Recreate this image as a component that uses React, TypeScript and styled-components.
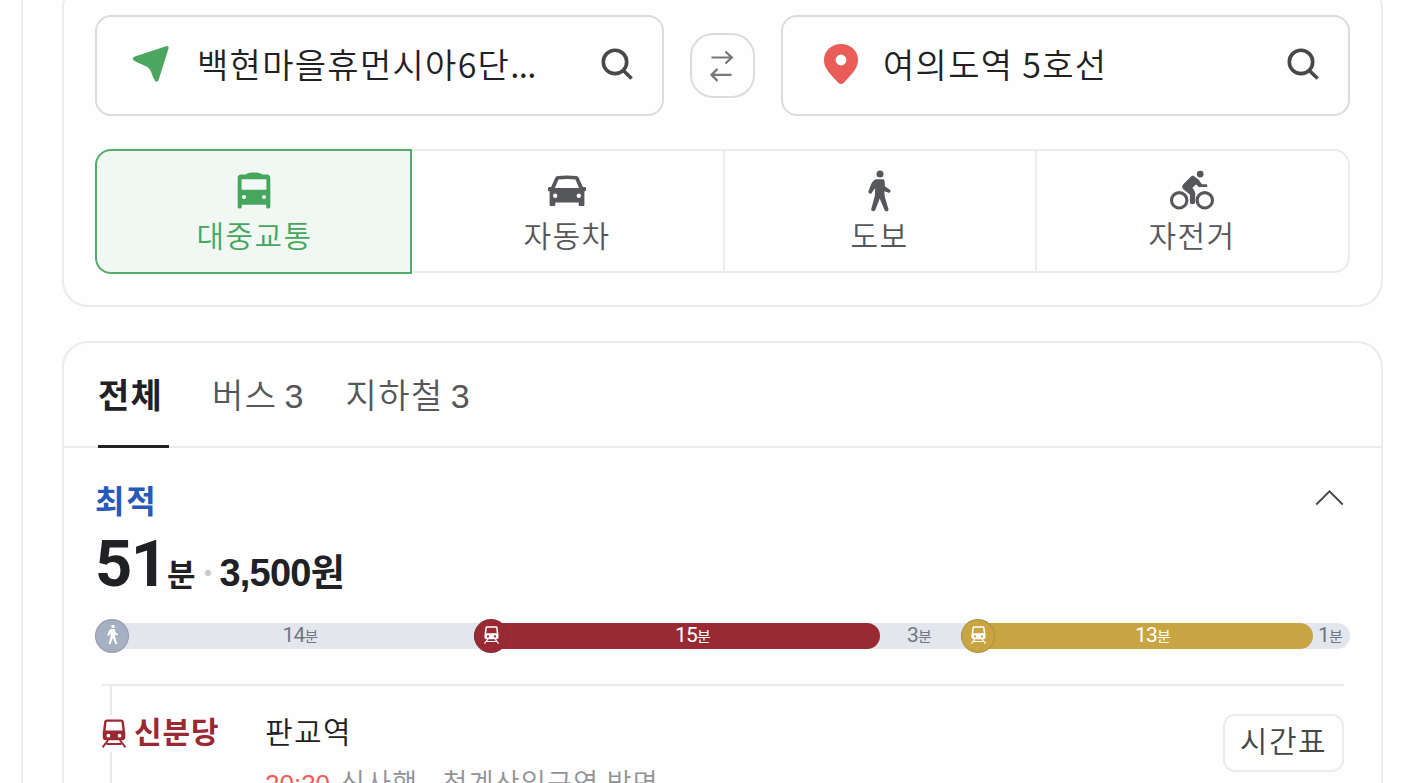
import React from 'react';
import styled, { createGlobalStyle, css } from 'styled-components';

const KR = "'Noto Sans CJK KR', sans-serif";
const LATIN = "'Liberation Sans', Arial, sans-serif";
const NUMERIC = "Roboto, 'Liberation Sans', sans-serif";

const GlobalStyle = createGlobalStyle`
  * {
    box-sizing: border-box;
  }

  body {
    margin: 0;
    background: #fefefe;
    overflow: hidden;
  }

  button {
    margin: 0;
    padding: 0;
    background: none;
    border: 0;
    font: inherit;
    color: inherit;
  }

  svg {
    display: block;
    flex: none;
  }
`;

const Page = styled.div`
  display: flex;
  height: 783px;
  padding-left: 21px;
  overflow: hidden;
  font-family: ${KR};
  font-weight: 350;
  color: #202124;
`;

const Panel = styled.main`
  flex: 1;
  margin-top: -18px;
  padding: 0 40px 0 39px;
  border-left: 2px solid #ebebf0;
`;

const Card = styled.section`
  border: 2px solid #ebebed;
  border-radius: 26px;
`;

const SearchCard = styled(Card)`
  height: 325px;
  padding: 31px 31px 0;
`;

const SearchRow = styled.div`
  display: grid;
  grid-template-columns: 569px 65px 569px;
  justify-content: space-between;
  align-items: center;
`;

const PlaceField = styled.div`
  display: grid;
  grid-template-columns: 64px 1fr 34px;
  align-items: center;
  height: 101px;
  padding: 0 28px 3px 36px;
  border: 2px solid #dbdcde;
  border-radius: 16px;
`;

const PlaceName = styled.span`
  font-size: 34px;
  line-height: 50px;
  letter-spacing: 1.3px;
  white-space: pre;
`;

const Ellipsis = styled.span`
  letter-spacing: -0.6px;
`;

const PinBox = styled.span`
  padding-left: 5px;
`;

const SwapButton = styled.button`
  display: grid;
  place-items: center;
  width: 65px;
  height: 65px;
  padding-right: 2px;
  border: 2px solid #dbdcde;
  border-radius: 23px;
`;

const ModeTabs = styled.div`
  display: grid;
  grid-template-columns: 317px 313px 312px 313px;
  margin-top: 33px;
`;

const ModeTab = styled.button<{ $active?: boolean }>`
  display: flex;
  flex-direction: column;
  align-items: center;
  height: 124px;
  padding: 18px 2px 0 0;
  border: 2px solid #ebebec;
  border-left: 0;
  color: #56575a;

  &:first-child {
    border-radius: 16px 0 0 16px;
  }

  &:last-child {
    border-radius: 0 16px 16px 0;
  }

  ${({ $active }) =>
    $active &&
    css`
      height: 125px;
      padding: 18px 0 0 1px;
      border: 2px solid #53ac69;
      background: #f1f8f3;
      color: #46a65c;
    `}
`;

const ModeLabel = styled.span`
  margin-top: -1px;
  padding-left: 1px;
  font-size: 30px;
  line-height: 44px;
  letter-spacing: 1.4px;
`;

const ResultCard = styled(Card)`
  height: 500px;
  margin-top: 34px;
`;

const FilterTabs = styled.nav`
  display: flex;
  height: 105px;
  padding-left: 34px;
  border-bottom: 2px solid #ebebed;
`;

const FilterTab = styled.button<{ $active?: boolean; $gap: number }>`
  display: flex;
  align-items: baseline;
  height: 105px;
  margin-right: ${({ $gap }) => $gap}px;
  padding-top: 26px;
  font-size: 34px;
  line-height: 50px;
  letter-spacing: 1.5px;
  color: #56575a;

  ${({ $active }) =>
    $active &&
    css`
      width: 71px;
      border-bottom: 3px solid #202124;
      font-weight: 700;
      letter-spacing: 1.3px;
      color: #202124;
    `}
`;

const FilterCount = styled.span`
  margin-left: 7px;
  font-family: ${LATIN};
  font-size: 34px;
  font-weight: 400;
  letter-spacing: 0;
`;

const Route = styled.article`
  padding: 27px 31px 0;
`;

const RouteTop = styled.div`
  display: flex;
  justify-content: space-between;
  align-items: center;
  height: 46px;
  padding-right: 6px;
`;

const Badge = styled.strong`
  padding-top: 2px;
  font-size: 32px;
  font-weight: 700;
  line-height: 46px;
  letter-spacing: 1.8px;
  color: #2759ba;
`;

const Summary = styled.div`
  display: flex;
  align-items: baseline;
  height: 102px;
  font-family: ${LATIN};
  font-weight: 700;
  line-height: 86px;
  color: #202124;
`;

const Minutes = styled.span`
  width: 72px;
  font-family: ${NUMERIC};
  font-size: 65px;
  letter-spacing: -1.5px;
`;

const MinutesUnit = styled.span`
  font-family: ${KR};
  font-size: 31px;
`;

const Dot = styled.i`
  width: 6px;
  height: 6px;
  margin: 0 9px;
  border-radius: 50%;
  background: #c5c7ca;
  transform: translateY(-10px);
`;

const Fare = styled.span`
  font-size: 38px;
  letter-spacing: -0.8px;
`;

const FareUnit = styled.span`
  font-family: ${KR};
  font-size: 37px;
`;

const Timeline = styled.div`
  display: flex;
  height: 26px;
  border-radius: 13px;
  background: #e3e6ed;
`;

const Segment = styled.div<{ $width: number; $color?: string }>`
  display: flex;
  align-items: center;
  width: ${({ $width }) => $width}px;
  border-radius: 13px;
  background: ${({ $color }) => $color || 'transparent'};
  color: ${({ $color }) => ($color ? '#fff' : '#707782')};
`;

const SegmentIcon = styled.span<{ $color: string }>`
  display: grid;
  flex: none;
  place-items: center;
  width: 34px;
  height: 34px;
  padding-bottom: 3px;
  border: 1px solid rgba(60, 60, 70, 0.2);
  border-radius: 50%;
  background: ${({ $color }) => $color};
  color: #fff;
`;

const SegmentTime = styled.span`
  flex: 1;
  margin-top: -2px;
  padding-right: 3px;
  font-family: ${NUMERIC};
  font-size: 21px;
  font-weight: 400;
  line-height: 26px;
  text-align: center;
  letter-spacing: -0.8px;
  white-space: nowrap;
`;

const SegmentUnit = styled.span`
  font-family: ${KR};
  font-size: 15px;
`;

const Steps = styled.div`
  display: grid;
  grid-template-columns: 163px 1fr 121px;
  margin: 35px 6px 0 7px;
  border-top: 2px solid #e9e9ee;
`;

const LineColumn = styled.div`
  display: flex;
  flex-direction: column;
`;

const Rail = styled.span<{ $height: number }>`
  width: 2px;
  height: ${({ $height }) => $height}px;
  margin-left: 8px;
  background: #e9e9ec;
`;

const LineName = styled.div`
  display: flex;
  align-items: center;
  gap: 8px;
  height: 37px;
  color: #9a2933;
`;

const LineLabel = styled.span`
  margin-top: -6px;
  font-size: 30px;
  font-weight: 700;
  line-height: 37px;
  letter-spacing: 0.9px;
`;

const StationColumn = styled.div`
  padding-top: 22px;
  white-space: nowrap;
`;

const StationName = styled.div`
  font-size: 30px;
  line-height: 44px;
  letter-spacing: 1.4px;
`;

const Departure = styled.div`
  display: flex;
  align-items: baseline;
  margin-top: 10px;
  font-size: 27px;
  line-height: 40px;
  letter-spacing: 1.3px;
  color: #929397;
`;

const DepartureTime = styled.span`
  margin-right: 10px;
  font-family: ${LATIN};
  font-size: 26px;
  font-weight: 400;
  letter-spacing: 0;
  color: #ee5d59;
`;

const Bound = styled.span`
  margin-right: 24px;
`;

const ScheduleButton = styled.button`
  height: 58px;
  margin-top: 28px;
  padding-bottom: 8px;
  border: 2px solid #ebebec;
  border-radius: 12px;
  font-size: 30px;
  line-height: 46px;
  letter-spacing: 1.5px;
  color: #444548;
`;

const SearchIcon = () => (
  <svg width="34" height="34" viewBox="0 0 34 34" fill="none" stroke="#47484a" strokeWidth="3.6">
    <circle cx="15" cy="14.9" r="11.7" />
    <path d="M23.300 23.500 31.600 31.500" />
  </svg>
);

const ArrowIcon = () => (
  <svg width="36" height="36" viewBox="0 0 36 36" fill="#4ba65f">
    <path d="M1.200 10.800 33 .2c1.700-.6 3 .6 2.500 2.300L25.600 34c-.7 2-2.700 2.100-3.800.4-3.300-5.400-2.800-9.500-6.700-12.700C12.300 19.400 5.500 17.500 1.300 14.800-.5 13.600-.6 11.500 1.200 10.800Z" />
  </svg>
);

const PinIcon = () => (
  <svg width="34" height="40" viewBox="0 0 34 40" fill="#e95c57">
    <path
      fillRule="evenodd"
      d="M17 0c9.600 0 17 6.900 17 15.900 0 6-3 10.100-6.700 14.500l-7.200 8.200c-1.900 1.900-4.300 1.900-6.200 0l-7.200-8.200C3 26 0 21.900 0 15.900 0 6.900 7.400 0 17 0Zm0 10.600a5.400 5.400 0 1 0 0 10.800 5.400 5.400 0 0 0 0-10.800Z"
    />
  </svg>
);

const SwapIcon = () => (
  <svg width="24" height="32" viewBox="0 0 24 32" fill="none" stroke="#77787a" strokeWidth="2.200">
    <path d="M1.500 7.500H21.300M15.500 1.500 21.800 7.500 15.500 13.500M21.500 24.900H1.700M7.500 18.900 1.500 24.900 7.500 30.900" />
  </svg>
);

const BusIcon = () => (
  <svg width="44" height="44" viewBox="0 0 44 44" fill="currentColor">
    <path
      fillRule="evenodd"
      d="M9 5.500h5C15 3.900 18 3.500 22 3.500s7 .4 8 2h5c2 0 3.300 1.300 3.300 3.200V38c0 2-4.100 2-4.100 0v-2.300H9.800V38c0 2-4.100 2-4.100 0V8.700C5.700 6.800 7 5.500 9 5.500Zm.6 4.800v10.400h24.800V10.300H9.600Zm2.400 15.700a2.100 2.100 0 1 0 0 4.200 2.100 2.100 0 0 0 0-4.200Zm20 0a2.100 2.100 0 1 0 0 4.200 2.100 2.100 0 0 0 0-4.200Z"
    />
  </svg>
);

const CarIcon = () => (
  <svg width="44" height="44" viewBox="0 0 44 44" fill="currentColor">
    <path
      fillRule="evenodd"
      d="M10.300 8.700C10.800 7.700 11.500 7.300 12.700 7.100c6.200-.9 12.400-.9 18.600 0 1.200.2 1.900.6 2.400 1.600l4.200 9.300h2.100c1.400 0 1.600 4 0 4.200l-.6.200v13.300c0 1-.4 1.300-1.300 1.300h-3.100c-.9 0-1.300-.4-1.300-1.300v-2.100H10.300v2.100c0 .9-.4 1.300-1.300 1.300H5.900c-.9 0-1.300-.4-1.300-1.300V22.400l-.6-.2c-1.600-.2-1.400-4.200 0-4.200h2.100l4.200-9.300Zm3.200 1.900-3.600 8.300h24.200l-3.600-8.300c-5.700-.9-11.300-.9-17 0ZM10.200 24.500a2.200 2.200 0 1 0 0 4.400 2.200 2.200 0 0 0 0-4.400Zm23.600 0a2.200 2.200 0 1 0 0 4.400 2.200 2.200 0 0 0 0-4.400Z"
    />
  </svg>
);

const WalkIcon = ({ size = 44 }: { size?: number }) => (
  <svg width={size} height={size} viewBox="0 0 44 44" fill="currentColor">
    <circle cx="23" cy="5" r="3.500" />
    <path d="M18.800 10.300h7c1.200 0 1.800.8 1.800 1.900l.3 5 4.700 3.300c2 1.300.5 4.100-1.600 3.100l-3.700-1.400.5 5.500 3.700 12.500c.6 2.400-3.300 2.900-4 .9L22.700 29.500l-4.400 11.600c-.9 2-4.700 1.200-4.100-1l3.700-13.300.3-7.500-1.600 1.700-1.800 3c-1.100 1.700-4 .5-3.300-1.700l2.400-6.600c1-2.600 2.500-4.100 4.900-5.400Z" />
  </svg>
);

const BikeIcon = () => (
  <svg width="46" height="44" viewBox="0 0 46 44" fill="none">
    <g stroke="currentColor" strokeWidth="3.100">
      <circle cx="10.200" cy="31.300" r="7.700" />
      <circle cx="35.800" cy="31.300" r="7.700" />
    </g>
    <g fill="currentColor">
      <circle cx="31.200" cy="5.100" r="3.400" />
      <path d="m22.300 7.300 1.800-.9 5.600 4.400 3.200 4.400h4.200c1.700 0 1.700 2.900 0 2.900h-6c-1.200 0-2-.6-2.800-1.700l-1.200-1-3.700 3.400 2 3c.5.700.8 1.500.8 2.500v9.100c0 2.300-5.300 2.300-5.300 0v-8l-6.200-4.900c-2.100-1.800-2-3.800-.2-5.600l7.800-7.600Z" />
    </g>
  </svg>
);

const TrainIcon = ({ width, height }: { width: number; height: number }) => (
  <svg width={width} height={height} viewBox="0 0 24 29" fill="currentColor">
    <path
      fillRule="evenodd"
      d="M5 .5h14c1.600 0 2.600.8 2.800 2.300L23.300 14v4.300c0 1.900-1.200 3-3 3H3.700c-1.800 0-3-1.100-3-3V14L2.200 2.800C2.400 1.300 3.400.5 5 .5Zm-.4 2.200L3.500 11.600h17L19.400 2.700H4.600ZM6.400 14.800a1.900 1.900 0 1 0 0 3.800 1.900 1.900 0 0 0 0-3.800Zm11.200 0a1.900 1.900 0 1 0 0 3.800 1.900 1.900 0 0 0 0-3.800Z"
    />
    <path d="m6.200 21-5.600 7.300M17.800 21l5.600 7.300M4.500 25h15" fill="none" stroke="currentColor" strokeWidth="1.900" />
  </svg>
);

const ChevronIcon = () => (
  <svg width="29" height="17" viewBox="0 0 29 17" fill="none" stroke="#47484b" strokeWidth="1.900">
    <path d="M1.300 14.500 14.500 1.300 27.700 14.500" />
  </svg>
);

interface Leg {
  minutes: number;
  width: number;
  kind?: 'walk' | 'train';
  color?: string;
}

const legs: Leg[] = [
  { minutes: 14, width: 379, kind: 'walk' },
  { minutes: 15, width: 406, kind: 'train', color: '#992933' },
  { minutes: 3, width: 81 },
  { minutes: 13, width: 352, kind: 'train', color: '#c8a542' },
  { minutes: 1, width: 37 },
];

const modes = [
  { label: '대중교통', icon: <BusIcon /> },
  { label: '자동차', icon: <CarIcon /> },
  { label: '도보', icon: <WalkIcon /> },
  { label: '자전거', icon: <BikeIcon /> },
];

const App: React.FC = () => (
  <Page>
    <GlobalStyle />
    <Panel>
      <SearchCard>
        <SearchRow>
          <PlaceField>
            <ArrowIcon />
            <PlaceName>
              백현마을휴먼시아6단<Ellipsis>...</Ellipsis>
            </PlaceName>
            <SearchIcon />
          </PlaceField>
          <SwapButton>
            <SwapIcon />
          </SwapButton>
          <PlaceField>
            <PinBox>
              <PinIcon />
            </PinBox>
            <PlaceName>여의도역 5호선</PlaceName>
            <SearchIcon />
          </PlaceField>
        </SearchRow>
        <ModeTabs>
          {modes.map(({ label, icon }, i) => (
            <ModeTab key={label} $active={i === 0}>
              {icon}
              <ModeLabel>{label}</ModeLabel>
            </ModeTab>
          ))}
        </ModeTabs>
      </SearchCard>

      <ResultCard>
        <FilterTabs>
          <FilterTab $active $gap={43}>전체</FilterTab>
          <FilterTab $gap={42}>
            버스<FilterCount>3</FilterCount>
          </FilterTab>
          <FilterTab $gap={0}>
            지하철<FilterCount>3</FilterCount>
          </FilterTab>
        </FilterTabs>

        <Route>
          <RouteTop>
            <Badge>최적</Badge>
            <ChevronIcon />
          </RouteTop>
          <Summary>
            <Minutes>51</Minutes>
            <MinutesUnit>분</MinutesUnit>
            <Dot />
            <Fare>3,500</Fare>
            <FareUnit>원</FareUnit>
          </Summary>
          <Timeline>
            {legs.map(({ minutes, width, kind, color }) => (
              <Segment key={minutes} $width={width} $color={color}>
                {kind && (
                  <SegmentIcon $color={color || '#a5b1c3'}>
                    {kind === 'walk' ? <WalkIcon size={21} /> : <TrainIcon width={15} height={18} />}
                  </SegmentIcon>
                )}
                <SegmentTime>
                  {minutes}
                  <SegmentUnit>분</SegmentUnit>
                </SegmentTime>
              </Segment>
            ))}
          </Timeline>
          <Steps>
            <LineColumn>
              <Rail $height={29} />
              <LineName>
                <TrainIcon width={24} height={29} />
                <LineLabel>신분당</LineLabel>
              </LineName>
              <Rail $height={40} />
            </LineColumn>
            <StationColumn>
              <StationName>판교역</StationName>
              <Departure>
                <DepartureTime>20:30</DepartureTime>
                <Bound>신사행</Bound>
                <span>청계산입구역 방면</span>
              </Departure>
            </StationColumn>
            <ScheduleButton>시간표</ScheduleButton>
          </Steps>
        </Route>
      </ResultCard>
    </Panel>
  </Page>
);

export default App;
